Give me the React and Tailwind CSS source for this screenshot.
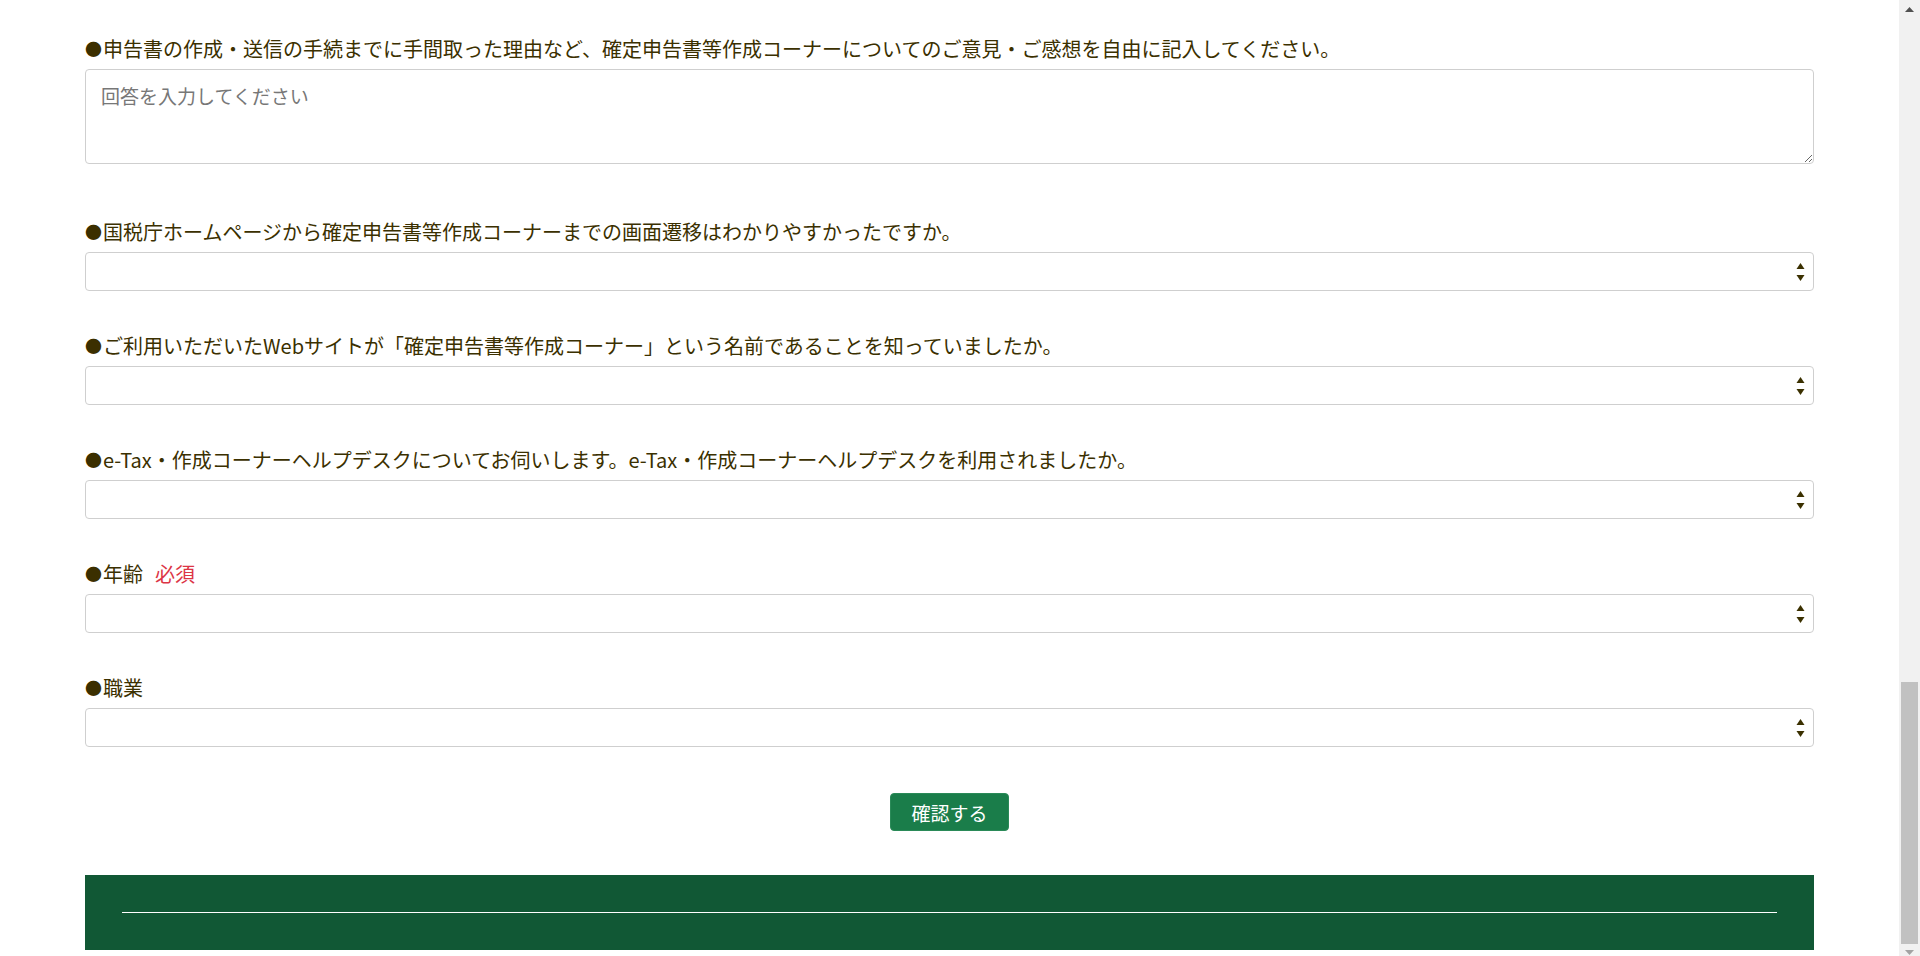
import React from "react";

const questions = [
  { label: "国税庁ホームページから確定申告書等作成コーナーまでの画面遷移はわかりやすかったですか。" },
  { label: "ご利用いただいたWebサイトが「確定申告書等作成コーナー」という名前であることを知っていましたか。" },
  { label: "e-Tax・作成コーナーヘルプデスクについてお伺いします。e-Tax・作成コーナーヘルプデスクを利用されましたか。" },
  { label: "年齢", required: true },
  { label: "職業" },
];

const Label = ({ children, required, className = "" }) => (
  <div className={`flex items-center h-[30px] text-[20px] leading-[30px] text-[#3b3000] whitespace-nowrap ${className}`}>
    <span className="inline-block w-[18px] text-[17px] leading-[30px] text-[#3b2f00]">●</span>
    <span>{children}</span>
    {required && <span className="ml-[12px] text-[#dc3545]">必須</span>}
  </div>
);

const FakeSelect = () => (
  <div
    role="combobox"
    className="mt-[5px] flex h-[39px] w-full items-center justify-end rounded-[4px] border border-[#cfcfcf] bg-white pr-[8px]"
  >
    <svg width="9" height="20" viewBox="0 0 9 20" className="block">
      <path d="M4.5 1 L8.5 7 L0.5 7 Z" fill="#3b3000" />
      <path d="M0.5 13 L8.5 13 L4.5 19 Z" fill="#3b3000" />
    </svg>
  </div>
);

const Scrollbar = () => (
  <div className="flex w-[21px] shrink-0 flex-col bg-[#f1f1f1]">
    <div className="flex h-[19px] items-center justify-center">
      <svg width="9" height="5" viewBox="0 0 9 5">
        <path d="M4.5 0 L9 5 L0 5 Z" fill="#505050" />
      </svg>
    </div>
    <div className="flex flex-1 flex-col justify-end px-[2px]">
      <div className="h-[262px] bg-[#c1c1c1]" />
    </div>
    <div className="flex h-[12px] items-start justify-center pt-[6px]">
      <svg width="9" height="5" viewBox="0 0 9 5">
        <path d="M0 0 L9 0 L4.5 5 Z" fill="#a3a3a3" />
      </svg>
    </div>
  </div>
);

export default function App() {
  return (
    <div
      className="flex h-[956px] w-full overflow-hidden bg-white"
      style={{ fontFamily: '"Noto Sans CJK JP", "Noto Sans", sans-serif' }}
    >
      <main className="min-w-0 flex-1">
        <div className="mx-auto w-[1729px] pt-[34px]">
          <Label>申告書の作成・送信の手続までに手間取った理由など、確定申告書等作成コーナーについてのご意見・ご感想を自由に記入してください。</Label>
          <textarea
            placeholder="回答を入力してください"
            className="mt-[5px] block h-[95px] w-full resize-y rounded-[4px] border border-[#cfcfcf] bg-white px-[15px] py-[12px] text-[19px] leading-[28px] text-[#333] placeholder:text-[#777] focus:outline-none"
          />

          {questions.map((q, i) => (
            <div key={q.label} className={i === 0 ? "mt-[53px]" : "mt-[40px]"}>
              <Label required={q.required}>{q.label}</Label>
              <FakeSelect />
            </div>
          ))}

          <div className="mt-[46px] flex justify-center">
            <button className="h-[38px] w-[119px] rounded-[4px] border border-[#2a8a58] bg-[#1a7d4a] text-[19px] leading-none text-white">
              確認する
            </button>
          </div>

          <footer className="mt-[44px] h-[75px] bg-[#115835] px-[37px] pt-[37px]">
            <div className="h-px bg-white" />
          </footer>
        </div>
      </main>
      <Scrollbar />
    </div>
  );
}
